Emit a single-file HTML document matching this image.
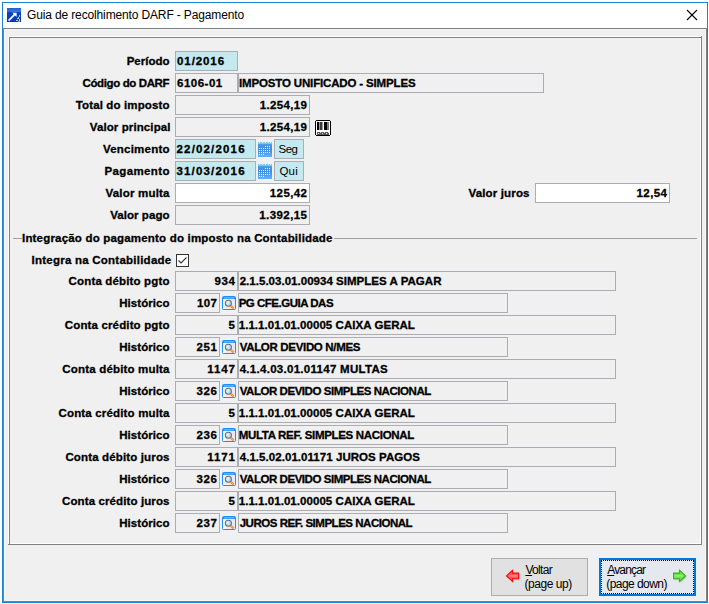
<!DOCTYPE html><html><head><meta charset="utf-8"><style>
html,body{margin:0;padding:0;width:709px;height:604px;overflow:hidden;background:#fff;}
*{box-sizing:border-box;}
body{font-family:"Liberation Sans",sans-serif;position:relative;}
.a{position:absolute;}
.fld{position:absolute;border:1px solid #abadb3;}
.t{position:absolute;white-space:nowrap;line-height:13px;}
.t[style*="bold"]{-webkit-text-stroke:0.3px #000;}
</style></head><body>
<div class="a" style="left:2px;top:2px;width:706px;height:601px;border:1px solid #1883d7;background:#fff"></div>
<div class="a" style="left:3px;top:28px;width:704px;height:574px;border:1px solid #828282;border-top-color:#7b818a;background:#f0f0f0"></div>
<div class="a" style="left:4px;top:29px;width:702px;height:572px;border:1px solid #f6f6f6;"></div>
<div class="a" style="left:8px;top:36px;width:693px;height:508px;border:1px solid #fff;"></div>
<div class="a" style="left:9px;top:37px;width:693px;height:508px;border:1px solid #838383;"></div>
<div class="a" style="left:701px;top:36px;width:1px;height:1px;background:#838383"></div>
<div class="a" style="left:8px;top:544px;width:1px;height:1px;background:#838383"></div>
<svg class="a" style="left:7px;top:8px" width="14" height="14" viewBox="0 0 14 14">
<defs><linearGradient id="ig" x1="0" y1="0" x2="0" y2="1"><stop offset="0" stop-color="#1f5fd2"/><stop offset="0.25" stop-color="#3576dc"/><stop offset="0.32" stop-color="#0b44bf"/><stop offset="1" stop-color="#0838b0"/></linearGradient></defs>
<rect x="0" y="0" width="14" height="14" fill="url(#ig)"/>
<path d="M5.3 4.8 H9.6 V9.1 Z" fill="#fff"/>
<path d="M1.6 12.6 L8 6.2" stroke="#fff" stroke-width="1.7" fill="none"/>
<g fill="#b8ccf2" shape-rendering="crispEdges"><rect x="12" y="7" width="1" height="2"/><rect x="11" y="9" width="1" height="1"/><rect x="10" y="10" width="2" height="1"/><rect x="12" y="11" width="1" height="2"/><rect x="9" y="12" width="2" height="1"/><rect x="11" y="13" width="2" height="1" fill="#7f9fe0"/></g>
</svg>
<div class="t" id="title" style="left:27px;top:9px;font-size:12px;font-weight:normal;letter-spacing:-0.139px;color:#000">Guia de recolhimento DARF - Pagamento</div>
<svg class="a" style="left:686px;top:9px" width="12" height="12" viewBox="0 0 12 12"><path d="M1 1 L11 11 M11 1 L1 11" stroke="#000" stroke-width="1.1"/></svg>
<div class="t" id="l_periodo" style="right:539.5px;margin-right:-0.0px;top:55px;font-size:11.5px;font-weight:bold;letter-spacing:0.0px;color:#000">Período</div>
<div class="fld" style="left:175px;top:51px;width:63px;height:20px;background:#c4e9ef"></div>
<div class="t" id="v_periodo" style="left:177px;top:55px;font-size:11.5px;font-weight:bold;letter-spacing:0.917px;color:#000">01/2016</div>
<div class="t" id="l_codigo" style="right:539.5px;margin-right:0.385px;top:77px;font-size:11.5px;font-weight:bold;letter-spacing:-0.385px;color:#000">Código do DARF</div>
<div class="fld" style="left:175px;top:73px;width:63px;height:20px;background:#f0f0f0"></div>
<div class="t" id="v_cod" style="left:177px;top:77px;font-size:11.5px;font-weight:bold;letter-spacing:0.5px;color:#000">6106-01</div>
<div class="fld" style="left:238px;top:73px;width:306px;height:20px;background:#f0f0f0"></div>
<div class="t" id="v_imp" style="left:239px;top:77px;font-size:11.5px;font-weight:bold;letter-spacing:-0.154px;color:#000">IMPOSTO UNIFICADO - SIMPLES</div>
<div class="t" id="l_total" style="right:539.5px;margin-right:-0.133px;top:99px;font-size:11.5px;font-weight:bold;letter-spacing:0.133px;color:#000">Total do imposto</div>
<div class="fld" style="left:175px;top:95px;width:135px;height:20px;background:#f0f0f0"></div>
<div class="t" id="v_total" style="right:402px;margin-right:-0.357px;top:99px;font-size:11.5px;font-weight:bold;letter-spacing:0.357px;color:#000">1.254,19</div>
<div class="t" id="l_vprinc" style="right:538.5px;margin-right:-0.107px;top:121px;font-size:11.5px;font-weight:bold;letter-spacing:0.107px;color:#000">Valor principal</div>
<div class="fld" style="left:175px;top:117px;width:135px;height:20px;background:#f0f0f0"></div>
<div class="t" id="v_vprinc" style="right:402px;margin-right:-0.357px;top:121px;font-size:11.5px;font-weight:bold;letter-spacing:0.357px;color:#000">1.254,19</div>
<svg class="a" style="left:315px;top:120px" width="16" height="16" viewBox="0 0 16 16" shape-rendering="crispEdges">
<rect x="1" y="0" width="14" height="1" fill="#000"/><rect x="1" y="15" width="14" height="1" fill="#000"/>
<rect x="0" y="1" width="1" height="14" fill="#000"/><rect x="15" y="1" width="1" height="14" fill="#000"/>
<rect x="1" y="1" width="14" height="14" fill="#fff"/>
<rect x="2" y="2" width="2" height="8" fill="#000"/>
<rect x="4" y="2" width="1" height="8" fill="#9a9a9a"/>
<rect x="5" y="2" width="2" height="8" fill="#3a3a3a"/>
<rect x="7" y="2" width="1" height="8" fill="#9a9a9a"/>
<rect x="9" y="2" width="3" height="8" fill="#000"/>
<rect x="12" y="2" width="2" height="8" fill="#7a7a7a"/>
<rect x="2" y="12" width="12" height="3" fill="#5a5a5a"/>
<path d="M3 13.5h1M5 12.5h1M7 13.5h1M9 12.5h1M11 13.5h1M13 12.5h1" stroke="#d8d8d8" stroke-width="1"/>
</svg>
<div class="t" id="l_venc" style="right:539.5px;margin-right:-0.222px;top:143px;font-size:11.5px;font-weight:bold;letter-spacing:0.222px;color:#000">Vencimento</div>
<div class="fld" style="left:175px;top:139px;width:81px;height:20px;background:#c4e9ef"></div>
<div class="t" id="v_venc" style="left:176.5px;top:143px;font-size:11.5px;font-weight:bold;letter-spacing:1.167px;color:#000">22/02/2016</div>
<svg class="a" style="left:258px;top:142px" width="14" height="15" viewBox="0 0 14 15" shape-rendering="crispEdges">
<defs><linearGradient id="cg142" x1="0" y1="0" x2="0" y2="1"><stop offset="0" stop-color="#4f9ce6"/><stop offset="0.5" stop-color="#3f8fe0"/><stop offset="1" stop-color="#6aaef0"/></linearGradient></defs>
<rect x="0" y="0" width="14" height="15" fill="url(#cg142)"/>
<rect x="0" y="0" width="14" height="2" fill="#7cc6f0"/>
<path d="M1 0.5h1M4 0.5h1M7 0.5h1M10 0.5h1M12 0.5h1" stroke="#c8f4ff" stroke-width="1"/>
<rect x="0" y="2" width="14" height="1" fill="#4aa0e8"/>
<rect x="7" y="4" width="1" height="1" fill="#e6f7ff"/><rect x="9" y="4" width="1" height="1" fill="#e6f7ff"/><rect x="11" y="4" width="1" height="1" fill="#e6f7ff"/><rect x="1" y="6" width="1" height="1" fill="#e6f7ff"/><rect x="3" y="6" width="1" height="1" fill="#e6f7ff"/><rect x="5" y="6" width="1" height="1" fill="#e6f7ff"/><rect x="7" y="6" width="1" height="1" fill="#e6f7ff"/><rect x="9" y="6" width="1" height="1" fill="#e6f7ff"/><rect x="11" y="6" width="1" height="1" fill="#e6f7ff"/><rect x="1" y="8" width="1" height="1" fill="#e6f7ff"/><rect x="3" y="8" width="1" height="1" fill="#e6f7ff"/><rect x="5" y="8" width="1" height="1" fill="#e6f7ff"/><rect x="7" y="8" width="1" height="1" fill="#e6f7ff"/><rect x="9" y="8" width="1" height="1" fill="#e6f7ff"/><rect x="11" y="8" width="1" height="1" fill="#e6f7ff"/><rect x="1" y="10" width="1" height="1" fill="#e6f7ff"/><rect x="3" y="10" width="1" height="1" fill="#e6f7ff"/><rect x="5" y="10" width="1" height="1" fill="#e6f7ff"/><rect x="7" y="10" width="1" height="1" fill="#e6f7ff"/><rect x="9" y="10" width="1" height="1" fill="#e6f7ff"/><rect x="11" y="10" width="1" height="1" fill="#e6f7ff"/><rect x="1" y="12" width="1" height="1" fill="#e6f7ff"/><rect x="3" y="12" width="1" height="1" fill="#e6f7ff"/><rect x="5" y="12" width="1" height="1" fill="#e6f7ff"/>
</svg>
<div class="fld" style="left:274px;top:139px;width:30px;height:20px;background:#c4e9ef"></div>
<div class="t" id="v_seg" style="left:278.5px;top:143px;font-size:11.5px;font-weight:normal;letter-spacing:-0.5px;color:#000">Seg</div>
<div class="t" id="l_pag" style="right:539.5px;margin-right:-0.375px;top:165px;font-size:11.5px;font-weight:bold;letter-spacing:0.375px;color:#000">Pagamento</div>
<div class="fld" style="left:175px;top:161px;width:81px;height:20px;background:#c4e9ef"></div>
<div class="t" id="v_pag" style="left:176.5px;top:165px;font-size:11.5px;font-weight:bold;letter-spacing:1.166px;color:#000">31/03/2016</div>
<svg class="a" style="left:258px;top:164px" width="14" height="15" viewBox="0 0 14 15" shape-rendering="crispEdges">
<defs><linearGradient id="cg164" x1="0" y1="0" x2="0" y2="1"><stop offset="0" stop-color="#4f9ce6"/><stop offset="0.5" stop-color="#3f8fe0"/><stop offset="1" stop-color="#6aaef0"/></linearGradient></defs>
<rect x="0" y="0" width="14" height="15" fill="url(#cg164)"/>
<rect x="0" y="0" width="14" height="2" fill="#7cc6f0"/>
<path d="M1 0.5h1M4 0.5h1M7 0.5h1M10 0.5h1M12 0.5h1" stroke="#c8f4ff" stroke-width="1"/>
<rect x="0" y="2" width="14" height="1" fill="#4aa0e8"/>
<rect x="7" y="4" width="1" height="1" fill="#e6f7ff"/><rect x="9" y="4" width="1" height="1" fill="#e6f7ff"/><rect x="11" y="4" width="1" height="1" fill="#e6f7ff"/><rect x="1" y="6" width="1" height="1" fill="#e6f7ff"/><rect x="3" y="6" width="1" height="1" fill="#e6f7ff"/><rect x="5" y="6" width="1" height="1" fill="#e6f7ff"/><rect x="7" y="6" width="1" height="1" fill="#e6f7ff"/><rect x="9" y="6" width="1" height="1" fill="#e6f7ff"/><rect x="11" y="6" width="1" height="1" fill="#e6f7ff"/><rect x="1" y="8" width="1" height="1" fill="#e6f7ff"/><rect x="3" y="8" width="1" height="1" fill="#e6f7ff"/><rect x="5" y="8" width="1" height="1" fill="#e6f7ff"/><rect x="7" y="8" width="1" height="1" fill="#e6f7ff"/><rect x="9" y="8" width="1" height="1" fill="#e6f7ff"/><rect x="11" y="8" width="1" height="1" fill="#e6f7ff"/><rect x="1" y="10" width="1" height="1" fill="#e6f7ff"/><rect x="3" y="10" width="1" height="1" fill="#e6f7ff"/><rect x="5" y="10" width="1" height="1" fill="#e6f7ff"/><rect x="7" y="10" width="1" height="1" fill="#e6f7ff"/><rect x="9" y="10" width="1" height="1" fill="#e6f7ff"/><rect x="11" y="10" width="1" height="1" fill="#e6f7ff"/><rect x="1" y="12" width="1" height="1" fill="#e6f7ff"/><rect x="3" y="12" width="1" height="1" fill="#e6f7ff"/><rect x="5" y="12" width="1" height="1" fill="#e6f7ff"/>
</svg>
<div class="fld" style="left:274px;top:161px;width:30px;height:20px;background:#c4e9ef"></div>
<div class="t" id="v_qui" style="left:279.5px;top:165px;font-size:11.5px;font-weight:normal;letter-spacing:0.15px;color:#000">Qui</div>
<div class="t" id="l_multa" style="right:539.5px;margin-right:-0.2px;top:187px;font-size:11.5px;font-weight:bold;letter-spacing:0.2px;color:#000">Valor multa</div>
<div class="fld" style="left:175px;top:183px;width:135px;height:20px;background:#ffffff"></div>
<div class="t" id="v_multa" style="right:402px;margin-right:-0.4px;top:187px;font-size:11.5px;font-weight:bold;letter-spacing:0.4px;color:#000">125,42</div>
<div class="t" id="l_juros" style="right:179.5px;margin-right:-0.15px;top:187px;font-size:11.5px;font-weight:bold;letter-spacing:0.15px;color:#000">Valor juros</div>
<div class="fld" style="left:535px;top:183px;width:135px;height:20px;background:#ffffff"></div>
<div class="t" id="v_juros" style="right:42px;margin-right:-0.425px;top:187px;font-size:11.5px;font-weight:bold;letter-spacing:0.425px;color:#000">12,54</div>
<div class="t" id="l_pago" style="right:539.5px;margin-right:-0.056px;top:209px;font-size:11.5px;font-weight:bold;letter-spacing:0.056px;color:#000">Valor pago</div>
<div class="fld" style="left:175px;top:205px;width:135px;height:20px;background:#f0f0f0"></div>
<div class="t" id="v_pago" style="right:402px;margin-right:-0.429px;top:209px;font-size:11.5px;font-weight:bold;letter-spacing:0.429px;color:#000">1.392,15</div>
<div class="a" style="left:13px;top:238px;width:9px;height:1px;background:#a0a0a0"></div>
<div class="a" style="left:334px;top:238px;width:363px;height:1px;background:#a0a0a0"></div>
<div class="t" id="grp" style="left:22px;top:232px;font-size:11.5px;font-weight:bold;letter-spacing:0.19px;color:#000">Integração do pagamento do imposto na Contabilidade</div>
<div class="t" id="l_integra" style="left:31.5px;top:254px;font-size:11.5px;font-weight:bold;letter-spacing:0.239px;color:#000">Integra na Contabilidade</div>
<svg class="a" style="left:176px;top:254px" width="13" height="13" viewBox="0 0 13 13"><rect x="0.5" y="0.5" width="12" height="12" fill="#fff" stroke="#333"/><path d="M2.5 6.5 L5 9 L10.5 3.5" stroke="#333" stroke-width="1.1" fill="none"/></svg>
<div class="t" id="l_r0" style="right:539.5px;margin-right:-0.156px;top:275px;font-size:11.5px;font-weight:bold;letter-spacing:0.156px;color:#000">Conta débito pgto</div>
<div class="fld" style="left:175px;top:271px;width:63px;height:20px;background:#f0f0f0"></div>
<div class="t" id="n_r0" style="right:474px;margin-right:-0.6px;top:275px;font-size:11.5px;font-weight:bold;letter-spacing:0.6px;color:#000">934</div>
<div class="fld" style="left:238px;top:271px;width:378px;height:20px;background:#f0f0f0"></div>
<div class="t" id="d_r0" style="left:239.7px;top:275px;font-size:11.5px;font-weight:bold;letter-spacing:0.027px;color:#000">2.1.5.03.01.00934 SIMPLES A PAGAR</div>
<div class="t" id="l_r1" style="right:539.5px;margin-right:-0.057px;top:297px;font-size:11.5px;font-weight:bold;letter-spacing:0.057px;color:#000">Histórico</div>
<div class="fld" style="left:175px;top:293px;width:45px;height:20px;background:#f0f0f0"></div>
<div class="t" id="n_r1" style="right:492px;margin-right:-0.4px;top:297px;font-size:11.5px;font-weight:bold;letter-spacing:0.4px;color:#000">107</div>
<svg class="a" style="left:222px;top:296px" width="14" height="14" viewBox="0 0 14 14">
<rect x="0.5" y="0.5" width="13" height="13" rx="1" fill="#ebe7f7" stroke="#1f8fff"/>
<rect x="1" y="1" width="12" height="2" fill="#1f8fff"/>
<rect x="2" y="1.5" width="10" height="0.8" fill="#9fd0ff"/>
<rect x="1" y="3" width="3" height="10" fill="#f6f4fc"/>
<circle cx="6.4" cy="7.3" r="3" fill="#b4e2f7" stroke="#6e6e6e" stroke-width="1.1"/>
<circle cx="5.6" cy="6.5" r="1.2" fill="#e4f6ff"/>
<path d="M8.6 9.5 L11.6 12.5" stroke="#f08a28" stroke-width="2.2"/>
<path d="M9.6 10.5 L10.6 11.5" stroke="#ffd060" stroke-width="1"/>
</svg>
<div class="fld" style="left:238px;top:293px;width:270px;height:20px;background:#f0f0f0"></div>
<div class="t" id="d_r1" style="left:238.7px;top:297px;font-size:11.5px;font-weight:bold;letter-spacing:-0.492px;color:#000">PG CFE.GUIA DAS</div>
<div class="t" id="l_r2" style="right:539.5px;margin-right:-0.147px;top:319px;font-size:11.5px;font-weight:bold;letter-spacing:0.147px;color:#000">Conta crédito pgto</div>
<div class="fld" style="left:175px;top:315px;width:63px;height:20px;background:#f0f0f0"></div>
<div class="t" id="n_r2" style="right:474px;margin-right:0px;top:319px;font-size:11.5px;font-weight:bold;letter-spacing:0px;color:#000">5</div>
<div class="fld" style="left:238px;top:315px;width:378px;height:20px;background:#f0f0f0"></div>
<div class="t" id="d_r2" style="left:238.7px;top:319px;font-size:11.5px;font-weight:bold;letter-spacing:0.053px;color:#000">1.1.1.01.01.00005 CAIXA GERAL</div>
<div class="t" id="l_r3" style="right:539.5px;margin-right:-0.057px;top:341px;font-size:11.5px;font-weight:bold;letter-spacing:0.057px;color:#000">Histórico</div>
<div class="fld" style="left:175px;top:337px;width:45px;height:20px;background:#f0f0f0"></div>
<div class="t" id="n_r3" style="right:492px;margin-right:-0.65px;top:341px;font-size:11.5px;font-weight:bold;letter-spacing:0.65px;color:#000">251</div>
<svg class="a" style="left:222px;top:340px" width="14" height="14" viewBox="0 0 14 14">
<rect x="0.5" y="0.5" width="13" height="13" rx="1" fill="#ebe7f7" stroke="#1f8fff"/>
<rect x="1" y="1" width="12" height="2" fill="#1f8fff"/>
<rect x="2" y="1.5" width="10" height="0.8" fill="#9fd0ff"/>
<rect x="1" y="3" width="3" height="10" fill="#f6f4fc"/>
<circle cx="6.4" cy="7.3" r="3" fill="#b4e2f7" stroke="#6e6e6e" stroke-width="1.1"/>
<circle cx="5.6" cy="6.5" r="1.2" fill="#e4f6ff"/>
<path d="M8.6 9.5 L11.6 12.5" stroke="#f08a28" stroke-width="2.2"/>
<path d="M9.6 10.5 L10.6 11.5" stroke="#ffd060" stroke-width="1"/>
</svg>
<div class="fld" style="left:238px;top:337px;width:270px;height:20px;background:#f0f0f0"></div>
<div class="t" id="d_r3" style="left:239.7px;top:341px;font-size:11.5px;font-weight:bold;letter-spacing:-0.324px;color:#000">VALOR DEVIDO N/MES</div>
<div class="t" id="l_r4" style="right:539.5px;margin-right:-0.176px;top:363px;font-size:11.5px;font-weight:bold;letter-spacing:0.176px;color:#000">Conta débito multa</div>
<div class="fld" style="left:175px;top:359px;width:63px;height:20px;background:#f0f0f0"></div>
<div class="t" id="n_r4" style="right:474px;margin-right:-0.899px;top:363px;font-size:11.5px;font-weight:bold;letter-spacing:0.899px;color:#000">1147</div>
<div class="fld" style="left:238px;top:359px;width:378px;height:20px;background:#f0f0f0"></div>
<div class="t" id="d_r4" style="left:239.7px;top:363px;font-size:11.5px;font-weight:bold;letter-spacing:0.284px;color:#000">4.1.4.03.01.01147 MULTAS</div>
<div class="t" id="l_r5" style="right:539.5px;margin-right:-0.057px;top:385px;font-size:11.5px;font-weight:bold;letter-spacing:0.057px;color:#000">Histórico</div>
<div class="fld" style="left:175px;top:381px;width:45px;height:20px;background:#f0f0f0"></div>
<div class="t" id="n_r5" style="right:492px;margin-right:-0.65px;top:385px;font-size:11.5px;font-weight:bold;letter-spacing:0.65px;color:#000">326</div>
<svg class="a" style="left:222px;top:384px" width="14" height="14" viewBox="0 0 14 14">
<rect x="0.5" y="0.5" width="13" height="13" rx="1" fill="#ebe7f7" stroke="#1f8fff"/>
<rect x="1" y="1" width="12" height="2" fill="#1f8fff"/>
<rect x="2" y="1.5" width="10" height="0.8" fill="#9fd0ff"/>
<rect x="1" y="3" width="3" height="10" fill="#f6f4fc"/>
<circle cx="6.4" cy="7.3" r="3" fill="#b4e2f7" stroke="#6e6e6e" stroke-width="1.1"/>
<circle cx="5.6" cy="6.5" r="1.2" fill="#e4f6ff"/>
<path d="M8.6 9.5 L11.6 12.5" stroke="#f08a28" stroke-width="2.2"/>
<path d="M9.6 10.5 L10.6 11.5" stroke="#ffd060" stroke-width="1"/>
</svg>
<div class="fld" style="left:238px;top:381px;width:270px;height:20px;background:#f0f0f0"></div>
<div class="t" id="d_r5" style="left:239.7px;top:385px;font-size:11.5px;font-weight:bold;letter-spacing:-0.452px;color:#000">VALOR DEVIDO SIMPLES NACIONAL</div>
<div class="t" id="l_r6" style="right:539.5px;margin-right:-0.166px;top:407px;font-size:11.5px;font-weight:bold;letter-spacing:0.166px;color:#000">Conta crédito multa</div>
<div class="fld" style="left:175px;top:403px;width:63px;height:20px;background:#f0f0f0"></div>
<div class="t" id="n_r6" style="right:474px;margin-right:0px;top:407px;font-size:11.5px;font-weight:bold;letter-spacing:0px;color:#000">5</div>
<div class="fld" style="left:238px;top:403px;width:378px;height:20px;background:#f0f0f0"></div>
<div class="t" id="d_r6" style="left:238.7px;top:407px;font-size:11.5px;font-weight:bold;letter-spacing:0.053px;color:#000">1.1.1.01.01.00005 CAIXA GERAL</div>
<div class="t" id="l_r7" style="right:539.5px;margin-right:-0.057px;top:429px;font-size:11.5px;font-weight:bold;letter-spacing:0.057px;color:#000">Histórico</div>
<div class="fld" style="left:175px;top:425px;width:45px;height:20px;background:#f0f0f0"></div>
<div class="t" id="n_r7" style="right:492px;margin-right:-0.65px;top:429px;font-size:11.5px;font-weight:bold;letter-spacing:0.65px;color:#000">236</div>
<svg class="a" style="left:222px;top:428px" width="14" height="14" viewBox="0 0 14 14">
<rect x="0.5" y="0.5" width="13" height="13" rx="1" fill="#ebe7f7" stroke="#1f8fff"/>
<rect x="1" y="1" width="12" height="2" fill="#1f8fff"/>
<rect x="2" y="1.5" width="10" height="0.8" fill="#9fd0ff"/>
<rect x="1" y="3" width="3" height="10" fill="#f6f4fc"/>
<circle cx="6.4" cy="7.3" r="3" fill="#b4e2f7" stroke="#6e6e6e" stroke-width="1.1"/>
<circle cx="5.6" cy="6.5" r="1.2" fill="#e4f6ff"/>
<path d="M8.6 9.5 L11.6 12.5" stroke="#f08a28" stroke-width="2.2"/>
<path d="M9.6 10.5 L10.6 11.5" stroke="#ffd060" stroke-width="1"/>
</svg>
<div class="fld" style="left:238px;top:425px;width:270px;height:20px;background:#f0f0f0"></div>
<div class="t" id="d_r7" style="left:238.7px;top:429px;font-size:11.5px;font-weight:bold;letter-spacing:-0.312px;color:#000">MULTA REF. SIMPLES NACIONAL</div>
<div class="t" id="l_r8" style="right:539.5px;margin-right:-0.148px;top:451px;font-size:11.5px;font-weight:bold;letter-spacing:0.148px;color:#000">Conta débito juros</div>
<div class="fld" style="left:175px;top:447px;width:63px;height:20px;background:#f0f0f0"></div>
<div class="t" id="n_r8" style="right:474px;margin-right:-0.899px;top:451px;font-size:11.5px;font-weight:bold;letter-spacing:0.899px;color:#000">1171</div>
<div class="fld" style="left:238px;top:447px;width:378px;height:20px;background:#f0f0f0"></div>
<div class="t" id="d_r8" style="left:239.7px;top:451px;font-size:11.5px;font-weight:bold;letter-spacing:0.054px;color:#000">4.1.5.02.01.01171 JUROS PAGOS</div>
<div class="t" id="l_r9" style="right:539.5px;margin-right:-0.057px;top:473px;font-size:11.5px;font-weight:bold;letter-spacing:0.057px;color:#000">Histórico</div>
<div class="fld" style="left:175px;top:469px;width:45px;height:20px;background:#f0f0f0"></div>
<div class="t" id="n_r9" style="right:492px;margin-right:-0.65px;top:473px;font-size:11.5px;font-weight:bold;letter-spacing:0.65px;color:#000">326</div>
<svg class="a" style="left:222px;top:472px" width="14" height="14" viewBox="0 0 14 14">
<rect x="0.5" y="0.5" width="13" height="13" rx="1" fill="#ebe7f7" stroke="#1f8fff"/>
<rect x="1" y="1" width="12" height="2" fill="#1f8fff"/>
<rect x="2" y="1.5" width="10" height="0.8" fill="#9fd0ff"/>
<rect x="1" y="3" width="3" height="10" fill="#f6f4fc"/>
<circle cx="6.4" cy="7.3" r="3" fill="#b4e2f7" stroke="#6e6e6e" stroke-width="1.1"/>
<circle cx="5.6" cy="6.5" r="1.2" fill="#e4f6ff"/>
<path d="M8.6 9.5 L11.6 12.5" stroke="#f08a28" stroke-width="2.2"/>
<path d="M9.6 10.5 L10.6 11.5" stroke="#ffd060" stroke-width="1"/>
</svg>
<div class="fld" style="left:238px;top:469px;width:270px;height:20px;background:#f0f0f0"></div>
<div class="t" id="d_r9" style="left:239.7px;top:473px;font-size:11.5px;font-weight:bold;letter-spacing:-0.452px;color:#000">VALOR DEVIDO SIMPLES NACIONAL</div>
<div class="t" id="l_r10" style="right:539.5px;margin-right:-0.111px;top:495px;font-size:11.5px;font-weight:bold;letter-spacing:0.111px;color:#000">Conta crédito juros</div>
<div class="fld" style="left:175px;top:491px;width:63px;height:20px;background:#f0f0f0"></div>
<div class="t" id="n_r10" style="right:474px;margin-right:0px;top:495px;font-size:11.5px;font-weight:bold;letter-spacing:0px;color:#000">5</div>
<div class="fld" style="left:238px;top:491px;width:378px;height:20px;background:#f0f0f0"></div>
<div class="t" id="d_r10" style="left:238.7px;top:495px;font-size:11.5px;font-weight:bold;letter-spacing:0.053px;color:#000">1.1.1.01.01.00005 CAIXA GERAL</div>
<div class="t" id="l_r11" style="right:539.5px;margin-right:-0.057px;top:517px;font-size:11.5px;font-weight:bold;letter-spacing:0.057px;color:#000">Histórico</div>
<div class="fld" style="left:175px;top:513px;width:45px;height:20px;background:#f0f0f0"></div>
<div class="t" id="n_r11" style="right:492px;margin-right:-0.65px;top:517px;font-size:11.5px;font-weight:bold;letter-spacing:0.65px;color:#000">237</div>
<svg class="a" style="left:222px;top:516px" width="14" height="14" viewBox="0 0 14 14">
<rect x="0.5" y="0.5" width="13" height="13" rx="1" fill="#ebe7f7" stroke="#1f8fff"/>
<rect x="1" y="1" width="12" height="2" fill="#1f8fff"/>
<rect x="2" y="1.5" width="10" height="0.8" fill="#9fd0ff"/>
<rect x="1" y="3" width="3" height="10" fill="#f6f4fc"/>
<circle cx="6.4" cy="7.3" r="3" fill="#b4e2f7" stroke="#6e6e6e" stroke-width="1.1"/>
<circle cx="5.6" cy="6.5" r="1.2" fill="#e4f6ff"/>
<path d="M8.6 9.5 L11.6 12.5" stroke="#f08a28" stroke-width="2.2"/>
<path d="M9.6 10.5 L10.6 11.5" stroke="#ffd060" stroke-width="1"/>
</svg>
<div class="fld" style="left:238px;top:513px;width:270px;height:20px;background:#f0f0f0"></div>
<div class="t" id="d_r11" style="left:239.7px;top:517px;font-size:11.5px;font-weight:bold;letter-spacing:-0.476px;color:#000">JUROS REF. SIMPLES NACIONAL</div>
<div class="a" style="left:491px;top:558px;width:97px;height:38px;background:#e1e1e1;border:1px solid #adadad"></div>
<div class="a" style="left:599px;top:558px;width:97px;height:38px;background:#e5e8ee;border:2px solid #0078d7"></div>
<div class="a" style="left:601px;top:560px;width:93px;height:34px;border:1px dotted #000"></div>
<svg class="a" style="left:505px;top:569px" width="16" height="14" viewBox="0 0 16 14">
<path d="M2.2 8.2 L8.6 2.3 V5 H15.1 V11.2 H8.6 V14 Z" fill="#000" opacity="0.12"/>
<path d="M1.5 6.9 L7.6 1.3 V4.1 H13.6 V9.7 H7.6 V12.5 Z" fill="#ff5a5a" stroke="#f20a0a" stroke-width="1.1" stroke-linejoin="miter"/>
<path d="M4 6.9 H13" stroke="#ff8a8a" stroke-width="1.4"/>
</svg>
<svg class="a" style="left:671px;top:569px" width="17" height="14" viewBox="0 0 17 14">
<path d="M15.9 8.2 L9.5 2.3 V5 H3.1 V11.2 H9.5 V14 Z" fill="#000" opacity="0.14"/>
<path d="M14.6 6.9 L8.5 1.3 V4.1 H2.6 V9.7 H8.5 V12.5 Z" fill="#6fe24c" stroke="#2fb814" stroke-width="1.1" stroke-linejoin="miter"/>
<path d="M3.5 6.9 H12" stroke="#98f07a" stroke-width="1.4"/>
</svg>
<div class="t" id="b_voltar" style="left:525.4px;top:564px;font-size:12px;font-weight:normal;letter-spacing:-0.66px;color:#000"><u>V</u>oltar</div>
<div class="t" id="b_pgup" style="left:524.6px;top:578px;font-size:12px;font-weight:normal;letter-spacing:-0.475px;color:#000">(page up)</div>
<div class="t" id="b_avancar" style="left:607.2px;top:564px;font-size:12px;font-weight:normal;letter-spacing:-0.833px;color:#000"><u>A</u>vançar</div>
<div class="t" id="b_pgdn" style="left:606.2px;top:578px;font-size:12px;font-weight:normal;letter-spacing:-0.55px;color:#000">(page down)</div>
</body></html>
